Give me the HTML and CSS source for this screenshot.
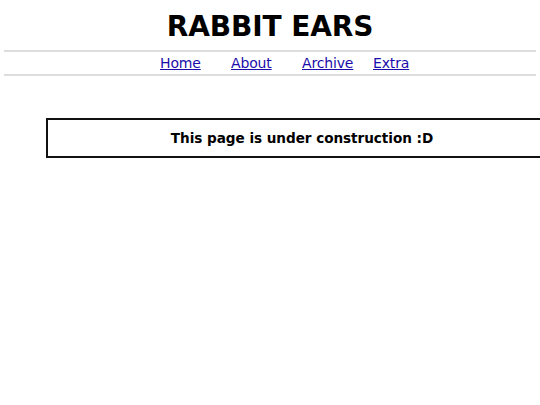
FILE: index.html
```html
<!DOCTYPE html>
<html>
<head>
<meta charset="utf-8">
<title>Rabbit Ears</title>
<link rel="stylesheet" href="styles.css">
</head>
<body>
<header class="site-header">
  <h1 class="title">RABBIT EARS</h1>
  <nav class="nav">
    <a href="#" class="nav-link">Home</a>
    <a href="#" class="nav-link">About</a>
    <a href="#" class="nav-link">Archive</a>
    <a href="#" class="nav-link">Extra</a>
  </nav>
</header>
<main class="content">
  <div class="notice">This page is under construction :D</div>
</main>
</body>
</html>
```
FILE: styles.css
```css
html, body {
  margin: 0;
  padding: 0;
  background: #fff;
}
body {
  padding: 0 4px;
  font-family: "DejaVu Sans", Verdana, sans-serif;
  overflow: hidden;
}
.site-header {
  display: flex;
  flex-direction: column;
}
.title {
  margin: 0;
  padding-top: 11px;
  height: 50px;
  box-sizing: border-box;
  text-align: center;
  font-size: 28px;
  line-height: 32px;
  font-weight: bold;
  letter-spacing: -0.1px;
  color: #000;
}
.nav {
  display: flex;
  justify-content: center;
  padding-left: 64px;
  border-top: 2px solid #ddd;
  border-bottom: 2px solid #ddd;
  height: 22px;
  align-items: center;
  font-size: 14px;
  letter-spacing: -0.15px;
}
.nav-link {
  min-width: 71px;
  color: #1a0dab;
  text-decoration: underline;
}
.content {
  padding-top: 42px;
  padding-left: 42px;
}
.notice {
  width: 512px;
  height: 40px;
  box-sizing: border-box;
  border: 2px solid #111;
  display: flex;
  align-items: center;
  justify-content: center;
  font-size: 13.6px;
  font-weight: bold;
  letter-spacing: -0.05px;
  color: #000;
}
```
